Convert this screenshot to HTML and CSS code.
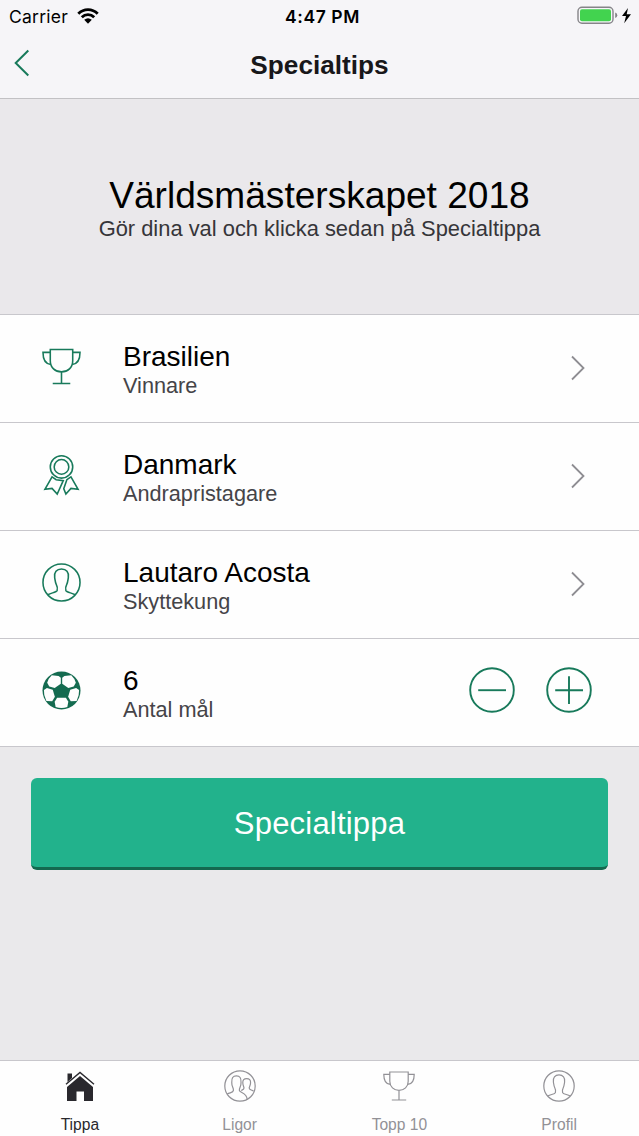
FILE: index.html
```html
<!DOCTYPE html>
<html lang="sv">
<head>
<meta charset="utf-8">
<title>Specialtips</title>
<link rel="stylesheet" href="styles.css">
</head>
<body>
<svg class="defs" aria-hidden="true">
  <symbol id="trophy" viewBox="0 0 40 40">
    <path d="M8.500 2.500H31.500V14C31.500 21 26.500 25.500 20 25.500S8.500 21 8.500 14ZM8.500 5.500H1C1 12 3.500 17.500 9 18M31.500 5.500H39C39 12 36.500 17.500 31 18M20 25.500V37.500M11 37.500H29"/>
  </symbol>
  <symbol id="person" viewBox="0 0 40 40">
    <circle cx="20" cy="20" r="19"/>
    <path d="M6 32.500C10 30.500 15 30 15.500 28.200C16 26 15.700 24 14.800 22.500C13.600 20.500 13.500 18 13 15C12.200 9.500 15 6.200 20 6.200S27.800 9.500 27 15C26.500 18 26.400 20.500 25.200 22.500C24.300 24 24 26 24.500 28.200C25 30 30 30.500 34 32.500"/>
  </symbol>
</svg>
<div class="screen">
  <header class="header">
    <div class="status">
      <div class="carrier"><span>Carrier</span>
        <svg class="wifi" viewBox="0 0 22 16"><path d="M1.300 5.700C6.800.2 15.200.2 20.700 5.700M4.800 9.200C8.300 5.800 13.700 5.800 17.200 9.200"/><path class="dot" d="M7.200 11.800Q11 8.700 14.800 11.800L11 15.700Z"/></svg>
      </div>
      <div class="clock">4:47 PM</div>
      <div class="power">
        <svg class="battery" viewBox="0 0 56 20"><rect class="case" x="1" y="1.200" width="35" height="16" rx="4"/><rect class="charge" x="3" y="3.200" width="31" height="12" rx="2"/><path class="tip" d="M38.200 6.500Q40.300 7 40.300 9.200T38.200 12Z"/><path class="bolt" d="M51 2L45 10H49L47.200 17.200L54 8.200H49.700Z"/></svg>
      </div>
    </div>
    <nav class="nav">
      <svg class="back" viewBox="0 0 16 28"><path d="M14.300 1.500L1.700 14L14.300 26.500"/></svg>
      <h1 class="title">Specialtips</h1>
    </nav>
  </header>
  <main class="content">
    <section class="hero">
      <h2 class="hero-title">Världsmästerskapet 2018</h2>
      <p class="hero-text">Gör dina val och klicka sedan på Specialtippa</p>
    </section>
    <section class="list">
      <div class="row">
        <svg class="icon" viewBox="0 0 40 40"><use href="#trophy"/></svg>
        <div class="label"><div class="value">Brasilien</div><div class="caption">Vinnare</div></div>
        <svg class="chevron" viewBox="0 0 16 26"><path d="M2 1.500L13.500 13L2 24.500"/></svg>
      </div>
      <div class="row">
        <svg class="icon" viewBox="0 0 40 40"><circle cx="20" cy="12.200" r="11.500"/><circle cx="20" cy="12.200" r="7.500"/><path d="M10.300 22.500L3 35.200L10.300 34.300L15.600 40L21.800 26.300L14.500 25.300L10.300 22.500ZM29.700 22.500L37 35.200L29.700 34.300L24.500 40L22.300 34.500L25.500 25.300L29.700 22.500Z"/></svg>
        <div class="label"><div class="value">Danmark</div><div class="caption">Andrapristagare</div></div>
        <svg class="chevron" viewBox="0 0 16 26"><path d="M2 1.500L13.500 13L2 24.500"/></svg>
      </div>
      <div class="row">
        <svg class="icon" viewBox="0 0 40 40"><use href="#person"/></svg>
        <div class="label"><div class="value">Lautaro Acosta</div><div class="caption">Skyttekung</div></div>
        <svg class="chevron" viewBox="0 0 16 26"><path d="M2 1.500L13.500 13L2 24.500"/></svg>
      </div>
      <div class="row">
        <svg class="icon ball" viewBox="0 0 40 40"><circle cx="20" cy="20" r="19.500"/><g class="patch"><path d="M10 4.300L17 5L19.300 7V13L13 17.500L7.500 16L5.300 12Q6.500 7.500 10 4.300Z"/><path d="M30 4.300L23 5L20.700 7V13L27 17.500L32.500 16L34.700 12Q33.500 7.500 30 4.300Z"/><path d="M2 19.500L5 17.500L11 19.200L13.200 26.500L10.500 31L4.500 30.700Q1.500 25 2 19.500Z"/><path d="M38 19.500L35 17.500L29 19.200L26.800 26.500L29.500 31L35.500 30.700Q38.500 25 38 19.500Z"/><path d="M15.500 27.500H24.500L27 31.500L26 37Q20 39 14 37L13 31.500Z"/></g></svg>
        <div class="label"><div class="value">6</div><div class="caption">Antal mål</div></div>
        <div class="stepper">
          <svg class="step" viewBox="0 0 46 46"><circle cx="23" cy="23" r="21.800"/><path d="M9.200 23.200H37"/></svg>
          <svg class="step" viewBox="0 0 46 46"><circle cx="23" cy="23" r="21.800"/><path d="M9.200 23.200H37M23 9.300V37"/></svg>
        </div>
      </div>
    </section>
    <button class="submit">Specialtippa</button>
  </main>
  <footer class="tabs">
    <div class="tab active">
      <svg class="tab-icon home" viewBox="0 0 32 32"><path d="M3.500 3.500H8V8L3.500 12ZM16 6L29 17V31H20V21.500H12.500V31H3V17Z"/><path class="roof" d="M2 14.300L16 2.500L30 14.300"/></svg>
      <span>Tippa</span>
    </div>
    <div class="tab">
      <svg class="tab-icon" viewBox="0 0 40 40"><circle cx="20" cy="20" r="19"/><path d="M4 30C8 28 11.500 28.500 11.800 25.500C12 22 9.500 21 9.700 15.500C9.500 10 11 7.300 15.500 7.300S21.500 10 21.300 15.500C21.500 21 19 22 19.200 25.500C19.500 29 28.500 27.500 29 37M21.500 25.500C24 24.500 25 24.500 25 22.500C25 20.500 23.500 19.500 23.500 16C23.300 12.500 25 10.700 28.300 10.700S33.500 12.500 33.200 16C33.200 19.500 31.500 20.500 31.500 22.500C31.500 25 34 24.500 37 26.500"/></svg>
      <span>Ligor</span>
    </div>
    <div class="tab">
      <svg class="tab-icon" viewBox="0 0 40 40"><use href="#trophy"/></svg>
      <span>Topp 10</span>
    </div>
    <div class="tab">
      <svg class="tab-icon" viewBox="0 0 40 40"><use href="#person"/></svg>
      <span>Profil</span>
    </div>
  </footer>
</div>
</body>
</html>
```
FILE: styles.css
```css
* { box-sizing: border-box; }
body { margin: 0; background: #eae9eb; font-family: "Liberation Sans", Arial, sans-serif; color: #000; }
h1, h2, p { margin: 0; font-weight: 400; }
svg { display: block; flex: none; fill: none; }
.defs { display: none; }
.screen { display: flex; flex-direction: column; height: 1136px; overflow: hidden; }

.header { height: 99px; background: #f6f5f8; border-bottom: 1px solid #c2c1c4; }
.status { display: grid; grid-template-columns: 1fr auto 1fr; align-items: center; height: 32px; padding: 0 6px 0 9px; font-family: Inter, sans-serif; font-size: 17.5px; }
.carrier { display: flex; align-items: center; gap: 9px; letter-spacing: .25px; }
.wifi { width: 22px; height: 16px; margin-top: -1px; stroke: #000; stroke-width: 2.9; }
.wifi .dot { fill: #000; stroke: none; }
.clock { font-weight: 600; padding-left: 3px; letter-spacing: .6px; }
.power { display: flex; justify-content: flex-end; }
.battery { width: 56px; height: 20px; }
.case { stroke: #858488; stroke-width: 1.4; }
.charge { fill: #42d34f; }
.tip { fill: #858488; }
.bolt { fill: #000; }
.nav { display: grid; grid-template-columns: 40px 1fr 40px; align-items: center; height: 66px; }
.back { width: 16px; height: 28px; margin: -4px 0 0 14px; stroke: #187a5b; stroke-width: 2; }
.title { text-align: center; font-size: 26.200px; line-height: 30px; font-weight: 700; color: #18171a; }

.content { flex: 1; }
.hero { height: 215px; padding-top: 75px; text-align: center; background: #eae8eb; }
.hero-title { font-size: 37.100px; line-height: 42px; }
.hero-text { font-size: 21.900px; line-height: 26px; color: #363539; }
.list { border-top: 1px solid #c8c7cc; }
.row { display: flex; align-items: center; height: 108px; padding: 0 47px 0 42px; background: #fefefe; border-bottom: 1px solid #c8c7cc; }
.icon { width: 39px; height: 39px; margin-top: -5px; stroke: #187a5b; stroke-width: 1.6; overflow: visible; }
.ball { fill: #146b50; stroke: none; }
.patch { fill: #fefefe; }
.label { flex: 1; margin-left: 42px; padding-top: 2px; }
.value { font-size: 28px; line-height: 32px; }
.caption { font-size: 21.700px; line-height: 26px; color: #454448; }
.chevron { width: 16px; height: 26px; margin: -2px 6px 0 0; stroke: #8e8d92; stroke-width: 1.8; }
.stepper { display: flex; gap: 31px; margin-top: -6px; }
.step { width: 46px; height: 46px; stroke: #187a5b; stroke-width: 1.9; }
.submit { display: block; width: 577px; height: 92px; margin: 31px 0 0 31px; padding: 2px 0 0; border: 0; border-bottom: 3px solid #14694f; border-radius: 6px; background: #22b28c; color: #fff; font: 31px "Liberation Sans", Arial, sans-serif; letter-spacing: .2px; }

.tabs { display: grid; grid-template-columns: repeat(4, 1fr); height: 76px; border-top: 1px solid #c8c7cc; background: #fefefe; font-size: 15.600px; color: #929196; }
.tab { display: flex; flex-direction: column; align-items: center; padding-top: 9px; }
.tab-icon { width: 32px; height: 32px; margin-bottom: 14px; stroke: #929196; stroke-width: 1.5; }
.tab span { line-height: 18px; }
.active { color: #29282d; }
.home { fill: #29282d; stroke: none; }
.home .roof { fill: none; stroke: #29282d; stroke-width: 1.4; }
```
